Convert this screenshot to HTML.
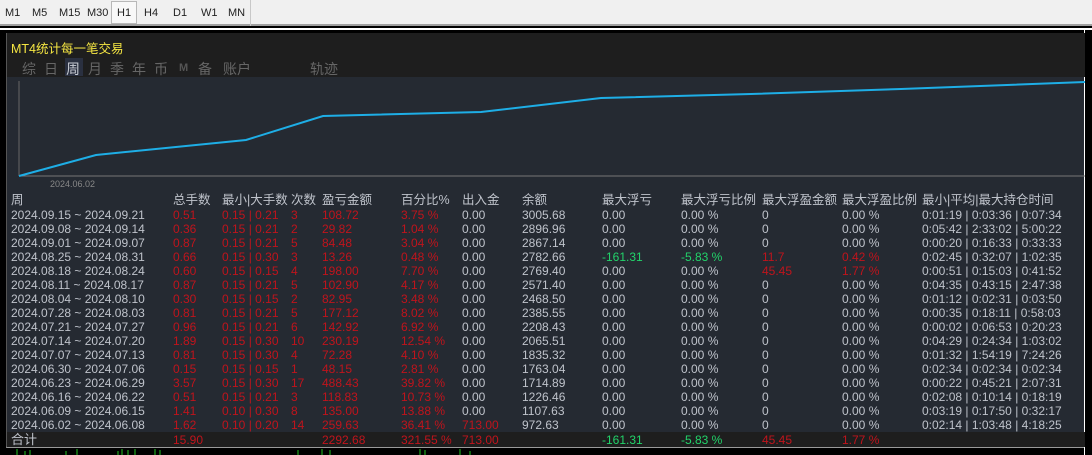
<!DOCTYPE html>
<html><head><meta charset="utf-8"><style>
*{margin:0;padding:0;box-sizing:border-box}
body{width:1092px;height:455px;overflow:hidden;background:#000;font-family:"Liberation Sans","Noto Sans CJK SC",sans-serif;position:relative}
.tb{position:absolute;left:0;top:0;width:1092px;height:26px;background:#f0f0f0;border-bottom:2px solid #a0a0a0}
.tb span{position:absolute;top:7px;font-size:11px;color:#222}
.h1b{position:absolute;left:111px;top:1px;width:26px;height:23px;border:1px solid #b8b8b8;background:#f8f8f8}
.sep{position:absolute;left:250px;top:0;width:1px;height:26px;background:#c8c8c8}
.wline{position:absolute;left:0;top:28px;width:1092px;height:2px;background:#fff}
.panel{position:absolute;left:6px;top:33px;width:1078px;height:415px;background:#252a32;border-bottom:2px solid #9a9a9a;border-left:1px solid #555}
.hdr{position:absolute;left:0;top:0;width:1078px;height:44px;background:#1e1e1e}
.title{position:absolute;left:4px;top:5px;font-size:12.5px;color:#f5e642}
.tabs span{position:absolute;top:26px;font-size:14px;color:#666}
.rw{position:absolute;left:4px;height:14px;font-size:12px;line-height:14px;color:#bfc3cb;display:grid;grid-template-columns:162px 49px 69px 31px 79px 61px 60px 80px 79px 81px 80px 80px 163px;white-space:nowrap}
.r{color:#c0141c}.g{color:#22d36a}
.tot{position:absolute;left:0;top:399px;width:1078px;height:15px;background:#1e1e1e}
.rb{position:absolute;left:1084px;top:30px;width:8px;height:425px;background:#000;border-left:1px solid #fff}
</style></head><body>
<div class="tb">
<div class="h1b"></div><div class="sep"></div>
<span style="left:5px">M1</span><span style="left:32px">M5</span><span style="left:59px">M15</span><span style="left:87px">M30</span><span style="left:117px">H1</span><span style="left:144px">H4</span><span style="left:173px">D1</span><span style="left:201px">W1</span><span style="left:228px">MN</span>
</div>
<div class="wline"></div>
<div class="rb"></div>
<div style="position:absolute;left:1071px;top:38px;font-size:13px;color:#6fa8dc">外</div>
<div class="panel">
<div class="hdr">
<div class="title">MT4统计每一笔交易</div>
<div class="tabs">
<span style="left:15px">综</span><span style="left:37px">日</span><div style="position:absolute;left:58px;top:25px;width:18px;height:18px;background:#2a3040"></div><span style="left:59px;color:#c8ccd4">周</span><span style="left:81px">月</span><span style="left:103px">季</span><span style="left:125px">年</span><span style="left:147px">币</span><span style="left:172px;font-size:11px;font-weight:bold;color:#555;top:29px">M</span><span style="left:191px">备</span><span style="left:216px">账户</span><span style="left:303px">轨迹</span>
</div></div>
<svg style="position:absolute;left:0;top:44px" width="1078" height="110">
<line x1="12" y1="4" x2="12" y2="99" stroke="#666"/>
<line x1="12" y1="99" x2="1078" y2="99" stroke="#777"/>
<polyline fill="none" stroke="#1eaee6" stroke-width="2" points="12,99 89,78 239,63 316,39 474,35 594,21 744,17 894,12 1078,5"/>
<text x="43" y="110" font-size="9" fill="#888" font-family="Liberation Sans">2024.06.02</text>
</svg>
<div class="tot"></div>
<div class="rw" style="top:160px;font-size:12.5px"><span>周</span><span>总手数</span><span>最小|大手数</span><span>次数</span><span>盈亏金额</span><span>百分比%</span><span>出入金</span><span>余额</span><span>最大浮亏</span><span>最大浮亏比例</span><span>最大浮盈金额</span><span>最大浮盈比例</span><span>最小|平均|最大持仓时间</span></div>
<div class="rw" style="top:175px"><span>2024.09.15 ~ 2024.09.21</span><span class="r">0.51</span><span class="r">0.15 | 0.21</span><span class="r">3</span><span class="r">108.72</span><span class="r">3.75 %</span><span>0.00</span><span>3005.68</span><span>0.00</span><span>0.00 %</span><span>0</span><span>0.00 %</span><span>0:01:19 | 0:03:36 | 0:07:34</span></div>
<div class="rw" style="top:189px"><span>2024.09.08 ~ 2024.09.14</span><span class="r">0.36</span><span class="r">0.15 | 0.21</span><span class="r">2</span><span class="r">29.82</span><span class="r">1.04 %</span><span>0.00</span><span>2896.96</span><span>0.00</span><span>0.00 %</span><span>0</span><span>0.00 %</span><span>0:05:42 | 2:33:02 | 5:00:22</span></div>
<div class="rw" style="top:203px"><span>2024.09.01 ~ 2024.09.07</span><span class="r">0.87</span><span class="r">0.15 | 0.21</span><span class="r">5</span><span class="r">84.48</span><span class="r">3.04 %</span><span>0.00</span><span>2867.14</span><span>0.00</span><span>0.00 %</span><span>0</span><span>0.00 %</span><span>0:00:20 | 0:16:33 | 0:33:33</span></div>
<div class="rw" style="top:217px"><span>2024.08.25 ~ 2024.08.31</span><span class="r">0.66</span><span class="r">0.15 | 0.30</span><span class="r">3</span><span class="r">13.26</span><span class="r">0.48 %</span><span>0.00</span><span>2782.66</span><span class="g">-161.31</span><span class="g">-5.83 %</span><span class="r">11.7</span><span class="r">0.42 %</span><span>0:02:45 | 0:32:07 | 1:02:35</span></div>
<div class="rw" style="top:231px"><span>2024.08.18 ~ 2024.08.24</span><span class="r">0.60</span><span class="r">0.15 | 0.15</span><span class="r">4</span><span class="r">198.00</span><span class="r">7.70 %</span><span>0.00</span><span>2769.40</span><span>0.00</span><span>0.00 %</span><span class="r">45.45</span><span class="r">1.77 %</span><span>0:00:51 | 0:15:03 | 0:41:52</span></div>
<div class="rw" style="top:245px"><span>2024.08.11 ~ 2024.08.17</span><span class="r">0.87</span><span class="r">0.15 | 0.21</span><span class="r">5</span><span class="r">102.90</span><span class="r">4.17 %</span><span>0.00</span><span>2571.40</span><span>0.00</span><span>0.00 %</span><span>0</span><span>0.00 %</span><span>0:04:35 | 0:43:15 | 2:47:38</span></div>
<div class="rw" style="top:259px"><span>2024.08.04 ~ 2024.08.10</span><span class="r">0.30</span><span class="r">0.15 | 0.15</span><span class="r">2</span><span class="r">82.95</span><span class="r">3.48 %</span><span>0.00</span><span>2468.50</span><span>0.00</span><span>0.00 %</span><span>0</span><span>0.00 %</span><span>0:01:12 | 0:02:31 | 0:03:50</span></div>
<div class="rw" style="top:273px"><span>2024.07.28 ~ 2024.08.03</span><span class="r">0.81</span><span class="r">0.15 | 0.21</span><span class="r">5</span><span class="r">177.12</span><span class="r">8.02 %</span><span>0.00</span><span>2385.55</span><span>0.00</span><span>0.00 %</span><span>0</span><span>0.00 %</span><span>0:00:35 | 0:18:11 | 0:58:03</span></div>
<div class="rw" style="top:287px"><span>2024.07.21 ~ 2024.07.27</span><span class="r">0.96</span><span class="r">0.15 | 0.21</span><span class="r">6</span><span class="r">142.92</span><span class="r">6.92 %</span><span>0.00</span><span>2208.43</span><span>0.00</span><span>0.00 %</span><span>0</span><span>0.00 %</span><span>0:00:02 | 0:06:53 | 0:20:23</span></div>
<div class="rw" style="top:301px"><span>2024.07.14 ~ 2024.07.20</span><span class="r">1.89</span><span class="r">0.15 | 0.30</span><span class="r">10</span><span class="r">230.19</span><span class="r">12.54 %</span><span>0.00</span><span>2065.51</span><span>0.00</span><span>0.00 %</span><span>0</span><span>0.00 %</span><span>0:04:29 | 0:24:34 | 1:03:02</span></div>
<div class="rw" style="top:315px"><span>2024.07.07 ~ 2024.07.13</span><span class="r">0.81</span><span class="r">0.15 | 0.30</span><span class="r">4</span><span class="r">72.28</span><span class="r">4.10 %</span><span>0.00</span><span>1835.32</span><span>0.00</span><span>0.00 %</span><span>0</span><span>0.00 %</span><span>0:01:32 | 1:54:19 | 7:24:26</span></div>
<div class="rw" style="top:329px"><span>2024.06.30 ~ 2024.07.06</span><span class="r">0.15</span><span class="r">0.15 | 0.15</span><span class="r">1</span><span class="r">48.15</span><span class="r">2.81 %</span><span>0.00</span><span>1763.04</span><span>0.00</span><span>0.00 %</span><span>0</span><span>0.00 %</span><span>0:02:34 | 0:02:34 | 0:02:34</span></div>
<div class="rw" style="top:343px"><span>2024.06.23 ~ 2024.06.29</span><span class="r">3.57</span><span class="r">0.15 | 0.30</span><span class="r">17</span><span class="r">488.43</span><span class="r">39.82 %</span><span>0.00</span><span>1714.89</span><span>0.00</span><span>0.00 %</span><span>0</span><span>0.00 %</span><span>0:00:22 | 0:45:21 | 2:07:31</span></div>
<div class="rw" style="top:357px"><span>2024.06.16 ~ 2024.06.22</span><span class="r">0.51</span><span class="r">0.15 | 0.21</span><span class="r">3</span><span class="r">118.83</span><span class="r">10.73 %</span><span>0.00</span><span>1226.46</span><span>0.00</span><span>0.00 %</span><span>0</span><span>0.00 %</span><span>0:02:08 | 0:10:14 | 0:18:19</span></div>
<div class="rw" style="top:371px"><span>2024.06.09 ~ 2024.06.15</span><span class="r">1.41</span><span class="r">0.10 | 0.30</span><span class="r">8</span><span class="r">135.00</span><span class="r">13.88 %</span><span>0.00</span><span>1107.63</span><span>0.00</span><span>0.00 %</span><span>0</span><span>0.00 %</span><span>0:03:19 | 0:17:50 | 0:32:17</span></div>
<div class="rw" style="top:385px"><span>2024.06.02 ~ 2024.06.08</span><span class="r">1.62</span><span class="r">0.10 | 0.20</span><span class="r">14</span><span class="r">259.63</span><span class="r">36.41 %</span><span class="r">713.00</span><span>972.63</span><span>0.00</span><span>0.00 %</span><span>0</span><span>0.00 %</span><span>0:02:14 | 1:03:48 | 4:18:25</span></div>
<div class="rw" style="top:400px"><span style="font-size:13px">合计</span><span class="r">15.90</span><span></span><span></span><span class="r">2292.68</span><span class="r">321.55 %</span><span class="r">713.00</span><span></span><span class="g">-161.31</span><span class="g">-5.83 %</span><span class="r">45.45</span><span class="r">1.77 %</span><span></span></div>
</div>
<svg style="position:absolute;left:0;top:449px" width="1084" height="6">
<g stroke="#22c522"><line x1="17" y1="0" x2="17" y2="6"/><line x1="25" y1="2" x2="25" y2="6"/><line x1="30" y1="1" x2="30" y2="6"/><line x1="66" y1="2" x2="66" y2="6"/><line x1="77" y1="0" x2="77" y2="6"/><line x1="118" y1="2" x2="118" y2="6"/><line x1="122" y1="0" x2="122" y2="6"/><line x1="128" y1="1" x2="128" y2="6"/><line x1="135" y1="0" x2="135" y2="6"/><line x1="155" y1="0" x2="155" y2="6"/><line x1="160" y1="1" x2="160" y2="6"/><line x1="298" y1="1" x2="298" y2="6"/><line x1="322" y1="0" x2="322" y2="6"/><line x1="330" y1="1" x2="330" y2="6"/><line x1="420" y1="0" x2="420" y2="6"/><line x1="425" y1="1" x2="425" y2="6"/><line x1="460" y1="0" x2="460" y2="6"/><line x1="470" y1="2" x2="470" y2="6"/></g>
</svg>
</body></html>
